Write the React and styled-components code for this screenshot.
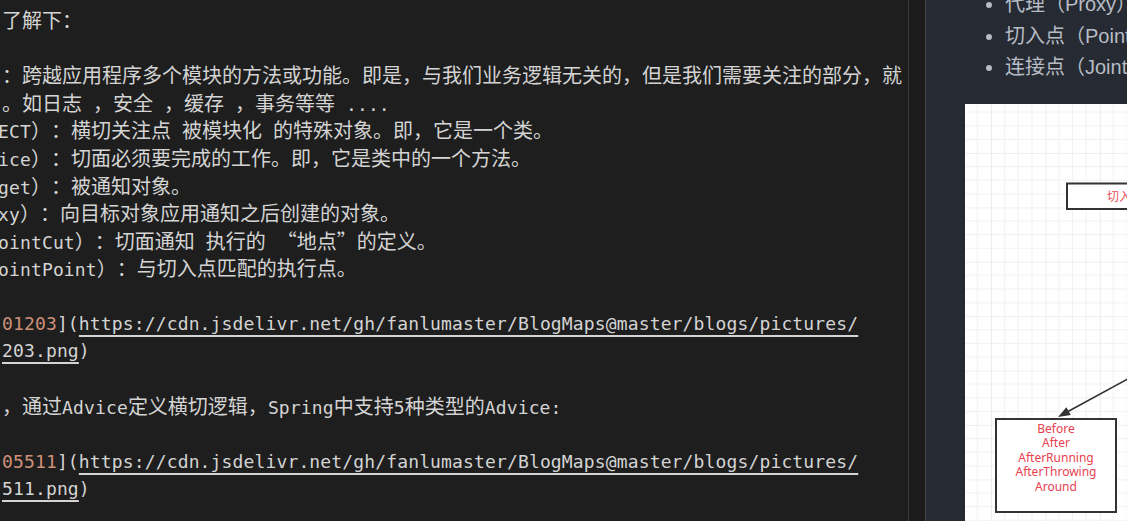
import React from "react";
import styled, { createGlobalStyle } from "styled-components";

const GlobalStyle = createGlobalStyle`
  html, body {
    margin: 0;
    padding: 0;
    background: #1e1e1e;
  }
  #root {
    width: 1127px;
    height: 521px;
  }
  * {
    text-spacing-trim: space-all;
  }
`;

const CJK = /([\u2e80-\u9fff\u3000-\u303f\uff00-\uffef\u201c\u201d]+)/;

const Mixed = ({ text }) =>
  text
    .split(CJK)
    .map((part, i) => (CJK.test(part) ? <Han key={i}>{part}</Han> : part));

const App = () => {
  return (
    <>
      <GlobalStyle />
      <Window>
        <Editor>
          <Line><Mixed text="了解下：" /></Line>
          <Line />
          <Line><Mixed text="：跨越应用程序多个模块的方法或功能。即是，与我们业务逻辑无关的，但是我们需要关注的部分，就" /></Line>
          <Line><Mixed text="。如日志 ，安全 ，缓存 ，事务等等 ...." /></Line>
          <Line $shift={-4}><Mixed text="ECT）：横切关注点 被模块化 的特殊对象。即，它是一个类。" /></Line>
          <Line $shift={-4}><Mixed text="ice）：切面必须要完成的工作。即，它是类中的一个方法。" /></Line>
          <Line $shift={-4}><Mixed text="get）：被通知对象。" /></Line>
          <Line $shift={-4}><Mixed text="xy）：向目标对象应用通知之后创建的对象。" /></Line>
          <Line $shift={-4}><Mixed text="ointCut）：切面通知 执行的 “地点”的定义。" /></Line>
          <Line $shift={-4}><Mixed text="ointPoint）：与切入点匹配的执行点。" /></Line>
          <Line />
          <Line>
            <Str>01203</Str>](<Url>https://cdn.jsdelivr.net/gh/fanlumaster/BlogMaps@master/blogs/pictures/</Url>
          </Line>
          <Line><Url>203.png</Url>)</Line>
          <Line />
          <Line><Mixed text="，通过Advice定义横切逻辑，Spring中支持5种类型的Advice:" /></Line>
          <Line />
          <Line>
            <Str>05511</Str>](<Url>https://cdn.jsdelivr.net/gh/fanlumaster/BlogMaps@master/blogs/pictures/</Url>
          </Line>
          <Line><Url>511.png</Url>)</Line>
        </Editor>
        <Scrollbar />
        <Preview>
          <TermList>
            <li>代理（Proxy）</li>
            <li>切入点（PointCut）</li>
            <li>连接点（JointPoint）</li>
          </TermList>
          <Figure>
            <svg width="420" height="440" viewBox="0 0 420 440">
              <defs>
                <pattern id="grid" x="26" y="49" width="54.4" height="54.4" patternUnits="userSpaceOnUse">
                  <path d="M13.6 0V54.4M27.2 0V54.4M40.8 0V54.4M0 13.6H54.4M0 27.2H54.4M0 40.8H54.4" stroke="#f1f1f1" strokeWidth="1" />
                  <path d="M0 0V54.4M0 0H54.4" stroke="#e2e2e2" strokeWidth="1.2" />
                </pattern>
              </defs>
              <rect width="420" height="440" fill="#ffffff" />
              <rect width="420" height="440" fill="url(#grid)" />
              <rect x="102" y="79.5" width="180" height="25.5" fill="#fff" stroke="#333" strokeWidth="2" />
              <text x="142" y="97" fontSize="12" fill="#e8505c" fontFamily="'Noto Sans CJK SC', sans-serif">切入点(PointCut)</text>
              <line x1="260" y1="222" x2="103" y2="307.5" stroke="#333" strokeWidth="1.6" />
              <polygon points="93,313 105.8,311 101.4,303.2" fill="#333" />
              <rect x="31" y="315" width="120" height="93" fill="#fff" stroke="#333" strokeWidth="2" />
              <g fontSize="12" fill="#e8414f" textAnchor="middle" fontFamily="'Noto Sans', 'Liberation Sans', sans-serif">
                <text x="91" y="328.5">Before</text>
                <text x="91" y="343">After</text>
                <text x="91" y="357.5">AfterRunning</text>
                <text x="91" y="372">AfterThrowing</text>
                <text x="91" y="386.5">Around</text>
              </g>
            </svg>
          </Figure>
        </Preview>
      </Window>
    </>
  );
};

export default App;

const Window = styled.div`
  display: flex;
  width: 1127px;
  height: 521px;
  overflow: hidden;
`;

const Editor = styled.div`
  flex: none;
  width: 909px;
  padding: 6px 0 0 2px;
  box-sizing: border-box;
  background: #1e1e1e;
  border-right: 1px solid #373737;
  overflow: hidden;
  color: #d4d4d4;
  font-family: "DejaVu Sans Mono", "Liberation Mono", monospace;
  font-size: 18px;
`;

const Line = styled.div`
  height: 27.6px;
  line-height: 27.6px;
  white-space: pre;
  letter-spacing: 0.14px;
  margin-left: ${(p) => p.$shift || 0}px;
`;

const Han = styled.span`
  font-family: "Noto Sans CJK SC", sans-serif;
  font-size: 20px;
  letter-spacing: 0;
  text-spacing-trim: space-all;
`;

const Str = styled.span`
  color: #ce9178;
`;

const Url = styled.span`
  text-decoration: underline;
  text-decoration-thickness: 2px;
  text-underline-offset: 5px;
`;

const Scrollbar = styled.div`
  flex: none;
  width: 16px;
  background: #1b1b1b;
  border-right: 1px solid #464646;
`;

const Preview = styled.div`
  flex: 1;
  min-width: 0;
  background: #262a33;
  padding-left: 39px;
  overflow: hidden;
  color: #b6bcc4;
  font-family: "Liberation Sans", "Noto Sans CJK SC", sans-serif;
  font-size: 20px;
`;

const TermList = styled.ul`
  margin: -11px 0 0;
  padding-left: 40px;
  white-space: nowrap;

  li {
    line-height: 31.5px;
  }
`;

const Figure = styled.div`
  margin-top: 20px;
  width: 420px;
  line-height: 0;
`;
